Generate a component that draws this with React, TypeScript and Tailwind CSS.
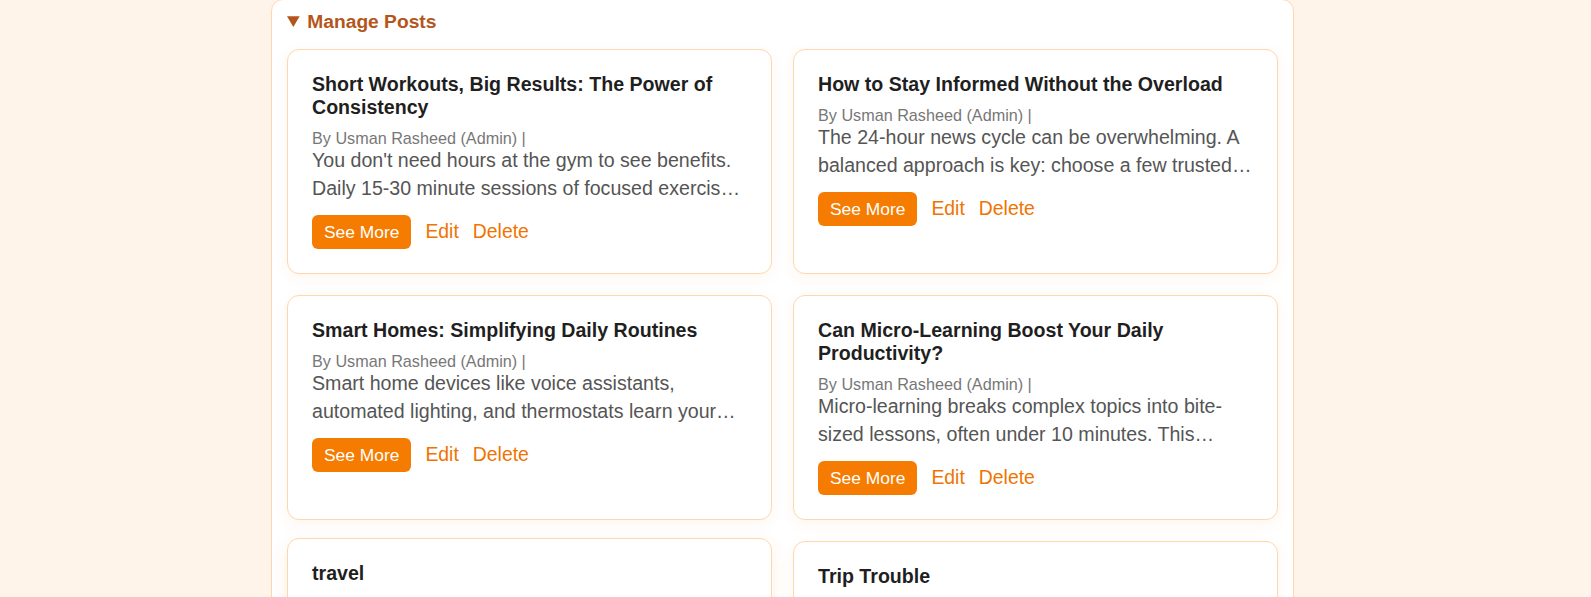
import React from 'react';

// Posts shown in the admin "Manage Posts" panel
const posts = [
  {
    id: 1,
    title: 'Short Workouts, Big Results: The Power of Consistency',
    author: 'Usman Rasheed (Admin)',
    excerpt:
      "You don't need hours at the gym to see benefits. Daily 15-30 minute sessions of focused exercise can improve strength, mood and energy over time.",
  },
  {
    id: 2,
    title: 'How to Stay Informed Without the Overload',
    author: 'Usman Rasheed (Admin)',
    excerpt:
      'The 24-hour news cycle can be overwhelming. A balanced approach is key: choose a few trusted sources and set limits on how often you check them.',
  },
  {
    id: 3,
    title: 'Smart Homes: Simplifying Daily Routines',
    author: 'Usman Rasheed (Admin)',
    excerpt:
      'Smart home devices like voice assistants, automated lighting, and thermostats learn your habits and make everyday tasks easier.',
  },
  {
    id: 4,
    title: 'Can Micro-Learning Boost Your Daily Productivity?',
    author: 'Usman Rasheed (Admin)',
    excerpt:
      'Micro-learning breaks complex topics into bite-sized lessons, often under 10 minutes. This approach fits learning into even the busiest day.',
  },
  {
    id: 5,
    title: 'travel',
    author: 'Usman Rasheed (Admin)',
    excerpt: 'A short note about travel plans and places worth visiting this year.',
    lifted: true,
  },
  {
    id: 6,
    title: 'Trip Trouble',
    author: 'Usman Rasheed (Admin)',
    excerpt: 'Missed connections, lost luggage and what we learned along the way.',
  },
];

const App = () => {
  return (
    <div className="min-h-screen bg-[#fff4ea] font-['Liberation_Sans',Arial,sans-serif]">
      <details
        open
        className="-mt-px ml-[271px] w-[1023px] rounded-xl border border-[#ffd6ad] bg-white px-[15px] pt-[11px] pb-4"
      >
        <summary className="mb-4 cursor-pointer text-[19.2px] leading-[22px] font-bold text-[#b4561b]">
          Manage Posts
        </summary>

        {/* Post cards */}
        <div className="grid grid-cols-2 gap-[21px]">
          {posts.map((post) => (
            <div
              key={post.id}
              className={`rounded-xl border border-[#ffd6ad] bg-white px-6 pt-[23px] pb-6 ${
                post.lifted
                  ? '-translate-y-[3px] shadow-[0_6px_18px_rgba(245,124,0,0.12)]'
                  : 'shadow-[0_4px_14px_rgba(245,124,0,0.07)]'
              }`}
            >
              <h3 className="mb-[11px] text-[19.6px] leading-[23px] font-bold text-[#1f1f1f]">
                {post.title}
              </h3>
              <p className="text-[16.2px] leading-4 text-[#777]">By {post.author} |</p>
              <p className="line-clamp-2 text-[19.6px] leading-[28px] text-[#555]">{post.excerpt}</p>
              <div className="mt-[13px] flex items-center gap-[14px]">
                <button className="rounded-md bg-[#f57c00] px-3 py-[7px] text-[17.4px] leading-5 text-white">
                  See More
                </button>
                <a href="#" className="text-[19.4px] text-[#f07400]">
                  Edit
                </a>
                <a href="#" className="text-[19.4px] text-[#f07400]">
                  Delete
                </a>
              </div>
            </div>
          ))}
        </div>
      </details>
    </div>
  );
};

export default App;
